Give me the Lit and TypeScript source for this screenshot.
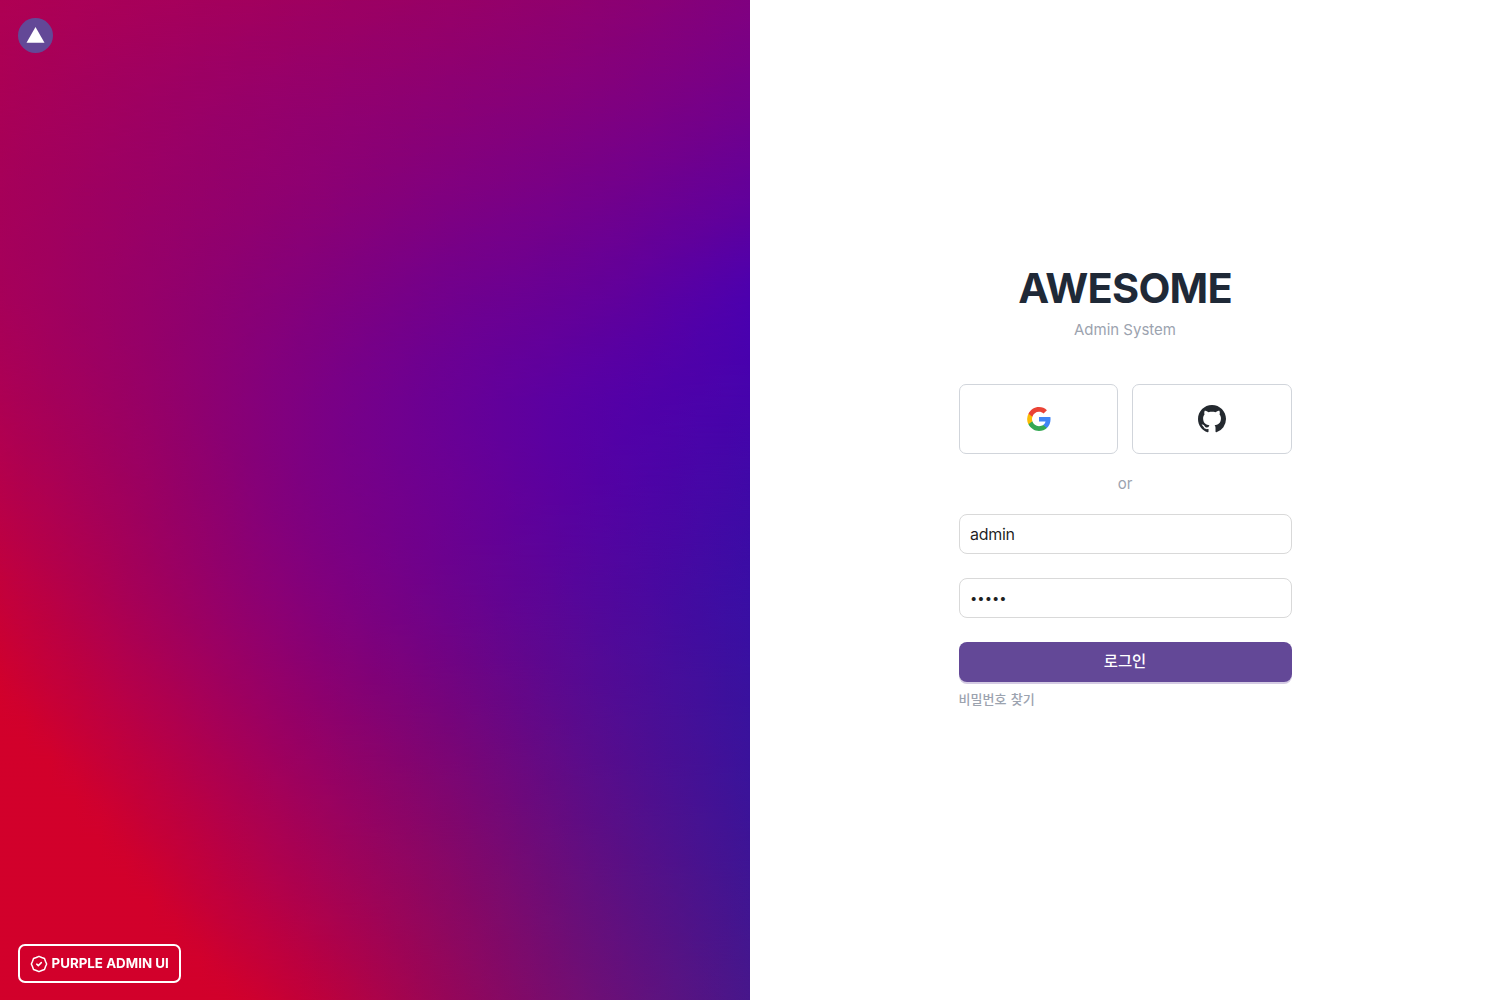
import { LitElement, html, css, svg } from "lit";
import { customElement } from "lit/decorators.js";

type RGB = [number, number, number];

/*
 * Control colours of the cover, one row per 100px, one column per 150px.
 * Channels may leave the visible range so that the clamped red corner keeps a crisp edge.
 */
const CONTROL: RGB[][] = [
  [[175, 0, 83], [167, 0, 90], [159, 0, 96], [151, 0, 103], [141, 0, 113], [128, 0, 128]],
  [[170, 0, 86], [158, 0, 98], [148, 0, 108], [139, 0, 116], [129, 0, 126], [115, 0, 139]],
  [[166, 0, 89], [153, 0, 102], [141, 0, 114], [127, 0, 128], [114, 0, 140], [97, 0, 155]],
  [[167, 0, 89], [149, 0, 105], [131, 0, 123], [113, 0, 141], [98, 0, 154], [76, 0, 174]],
  [[173, 0, 83], [150, 0, 103], [126, 0, 129], [105, 0, 149], [86, 0, 165], [70, 3, 172]],
  [[183, 0, 73], [155, 0, 97], [127, 0, 127], [107, 0, 146], [84, 2, 162], [63, 9, 167]],
  [[197, 0, 57], [163, 0, 90], [134, 0, 120], [108, 2, 139], [82, 7, 155], [57, 14, 164]],
  [[211, 0, 42], [178, 0, 76], [145, 0, 106], [116, 4, 125], [84, 11, 146], [57, 17, 158]],
  [[229, -2, 25], [194, 0, 59], [160, 1, 91], [127, 6, 111], [90, 13, 136], [59, 19, 153]],
  [[246, -4, 8], [210, 0, 43], [175, 1, 76], [138, 7, 99], [98, 15, 126], [64, 21, 146]],
  [[262, -6, -10], [228, -1, 26], [195, 0, 56], [149, 6, 89], [108, 15, 118], [71, 22, 139]],
];

const COLS = 30;
const STEP = 20;

const spline = (p: number[], t: number): number => {
  const n = p.length - 1;
  const i = Math.min(Math.floor(t), n - 1);
  const f = t - i;
  const b = p[i];
  const c = p[i + 1];
  const a = i > 0 ? p[i - 1] : 2 * b - c;
  const d = i + 2 <= n ? p[i + 2] : 2 * c - b;
  return b + 0.5 * f * (c - a + f * (2 * a - 5 * b + 4 * c - d + f * (3 * (b - c) + d - a)));
};

const colorAt = (u: number, v: number): string => {
  const ch = [0, 1, 2].map((k) => spline(CONTROL.map((row) => spline(row.map((c) => c[k]), u * 5)), v * 10));
  const [r, g, b] = [Math.min(210, ch[0]), Math.max(0, ch[1]), Math.max(43, ch[2])].map((x) => Math.round(x * 10) / 10);
  return `rgb(${r},${g},${b})`;
};

const ROWS = Array.from({ length: 1000 / STEP + 1 }, (_, i) => ({
  y: i * STEP,
  stops: Array.from({ length: COLS + 1 }, (_, k) => colorAt(k / COLS, (i * STEP) / 1000)),
}));

@customElement("login-cover")
export class LoginCover extends LitElement {
  static styles = css`
    :host { display: flex; position: relative; isolation: isolate; overflow: hidden; color: #fff; background: #000; }
    .mesh { position: absolute; inset: 0; width: 100%; height: 100%; }
    .band { mix-blend-mode: plus-lighter; }
    .content { position: relative; flex: 1; box-sizing: border-box; padding: 18px 18px 17px; display: flex; flex-direction: column; justify-content: space-between; align-items: flex-start; }
    .logo { width: 35px; height: 35px; display: block; }
    .badge { box-sizing: border-box; width: 163px; height: 39px; display: flex; align-items: center; gap: 3.5px; padding: 0 0 1px 10px; border: 2px solid #fff; border-radius: 7px; font: 700 13.3px/20px Inter, sans-serif; letter-spacing: 0.03px; white-space: nowrap; }
    .badge svg { width: 18px; height: 18px; flex: none; position: relative; top: 0.5px; }
  `;
  render() {
    return html`
      <svg class="mesh" viewBox="0 0 750 1000" preserveAspectRatio="none">
        <defs>
          <linearGradient id="tent" x1="0" y1="0" x2="0" y2="1">
            <stop offset="0" stop-color="#fff" stop-opacity="0" />
            <stop offset=".5" stop-color="#fff" />
            <stop offset="1" stop-color="#fff" stop-opacity="0" />
          </linearGradient>
          ${ROWS.map((r, i) => svg`
            <linearGradient id=${"g" + i}>
              ${r.stops.map((c, k) => svg`<stop offset=${k / COLS} stop-color=${c} />`)}
            </linearGradient>
            <mask id=${"m" + i} maskUnits="userSpaceOnUse" x="0" y=${r.y - STEP} width="750" height=${STEP * 2}>
              <rect x="0" y=${r.y - STEP} width="750" height=${STEP * 2} fill="url(#tent)" />
            </mask>`)}
        </defs>
        ${ROWS.map((r, i) => svg`<g class="band" mask=${`url(#m${i})`}>
          <rect x="0" y=${r.y - STEP} width="750" height=${STEP * 2} fill=${`url(#g${i})`} />
        </g>`)}
      </svg>
      <div class="content">
        <svg class="logo" viewBox="0 0 35 35"><circle cx="17.5" cy="17.5" r="17.5" fill="#634897" /><path d="M17.5 9 26.5 24.8H8.5z" fill="#fff" /></svg>
        <div class="badge">
          <svg viewBox="0 0 24 24" fill="none" stroke="#fff" stroke-width="2" stroke-linecap="round" stroke-linejoin="round">
            <path d="M8.4 3.4 12 1.8 15.6 3.4 19.3 4.7 20.6 8.4 22.2 12 20.6 15.6 19.3 19.3 15.6 20.6 12 22.2 8.4 20.6 4.7 19.3 3.4 15.6 1.8 12 3.4 8.4 4.7 4.7z" /><path d="m9 12.2 2.1 2 4-4" />
          </svg>
          <span>PURPLE ADMIN UI</span>
        </div>
      </div>`;
  }
}

@customElement("app-root")
export class AppRoot extends LitElement {
  static styles = css`
    :host { display: grid; grid-template-columns: 1fr 1fr; height: 100vh; background: #fff; font-family: Inter, "Noto Sans CJK KR", sans-serif; }
    .panel { display: flex; justify-content: center; padding-top: 264px; }
    .form { width: 333px; display: flex; flex-direction: column; }
    h1 { margin: 0; text-align: center; font-size: 41.5px; line-height: 48px; font-weight: 700; color: #1f2937; letter-spacing: -0.8px; }
    .sub { margin-top: 6px; text-align: center; font-size: 15px; line-height: 24px; color: #9ca3af; }
    .social { margin-top: 42px; display: grid; grid-template-columns: 159px 160px; gap: 14px; }
    .social button { height: 70px; box-sizing: border-box; padding: 0; display: flex; align-items: center; justify-content: center; background: #fff; border: 1px solid #d1d5db; border-radius: 7px; }
    .social svg { width: 28px; height: 28px; display: block; }
    .social .google { margin-left: 1px; }
    .or { margin: 18px 0; text-align: center; font-size: 15px; line-height: 24px; color: #9ca3af; }
    input { box-sizing: border-box; width: 100%; height: 40px; margin: 0 0 24px; padding: 0 10px 0 10.5px; border: 1px solid #d9d9d9; border-radius: 8px; background: #fff; color: rgba(0, 0, 0, 0.88); font: 16px/24px Inter, sans-serif; letter-spacing: -0.3px; outline: none; }
    input[type="password"] { font-size: 13px; letter-spacing: 0; padding-bottom: 1px; }
    .submit { height: 40px; padding: 0 0 4px; border: 0; border-radius: 8px; background: #634897; box-shadow: 0 2px 0 #d4cbe3; color: #fff; font: 500 15.4px/24px "Noto Sans CJK KR", sans-serif; }
    .forgot { margin-top: 7px; font: 13px/20px "Noto Sans CJK KR", sans-serif; font-weight: 500; word-spacing: 1.5px; color: #9ca3af; }
  `;
  render() {
    return html`
      <login-cover></login-cover>
      <main class="panel">
        <div class="form">
          <h1>AWESOME</h1>
          <div class="sub">Admin System</div>
          <div class="social">
            <button aria-label="Google">
              <svg class="google" viewBox="0 0 24 24">
                <path fill="#4285F4" d="M21.9 12.2c0-.7-.06-1.25-.17-1.85H12v3.8h5.6c-.24 1.25-.95 2.3-2.05 3.05v2.5h3.25c1.95-1.8 3.1-4.4 3.1-7.5z" />
                <path fill="#34A853" d="M12 22.3c2.75 0 5.05-.9 6.8-2.6l-3.25-2.5c-.9.6-2.1.97-3.55.97-2.65 0-4.9-1.8-5.7-4.22H2.95v2.6C4.7 19.95 8.1 22.3 12 22.3z" />
                <path fill="#FBBC05" d="M6.3 13.95a6 6 0 0 1 0-3.9v-2.6H2.95a10.2 10.2 0 0 0 0 9.1z" />
                <path fill="#EA4335" d="M12 5.83c1.5 0 2.83.52 3.9 1.52l2.88-2.88C17.03 2.8 14.74 1.8 12 1.8c-3.9 0-7.3 2.25-9.05 5.65l3.35 2.6c.8-2.42 3.05-4.22 5.7-4.22z" />
              </svg>
            </button>
            <button aria-label="GitHub">
              <svg viewBox="0 0 16 16"><path fill="#24292f" d="M8 0C3.58 0 0 3.58 0 8c0 3.54 2.29 6.53 5.47 7.59.4.07.55-.17.55-.38 0-.19-.01-.82-.01-1.49-2.01.37-2.53-.49-2.69-.94-.09-.23-.48-.94-.82-1.13-.28-.15-.68-.52-.01-.53.63-.01 1.08.58 1.23.82.72 1.21 1.87.87 2.33.66.07-.52.28-.87.51-1.07-1.78-.2-3.64-.89-3.64-3.95 0-.87.31-1.59.82-2.15-.08-.2-.36-1.02.08-2.12 0 0 .67-.21 2.2.82.64-.18 1.32-.27 2-.27s1.36.09 2 .27c1.53-1.04 2.2-.82 2.2-.82.44 1.1.16 1.92.08 2.12.51.56.82 1.27.82 2.15 0 3.07-1.87 3.75-3.65 3.95.29.25.54.73.54 1.48v2.2c0 .21.15.46.55.38A8.01 8.01 0 0 0 16 8c0-4.42-3.58-8-8-8z" /></svg>
            </button>
          </div>
          <div class="or">or</div>
          <input type="text" .value=${"admin"} />
          <input type="password" .value=${"admin"} />
          <button class="submit">로그인</button>
          <div class="forgot">비밀번호 찾기</div>
        </div>
      </main>`;
  }
}
